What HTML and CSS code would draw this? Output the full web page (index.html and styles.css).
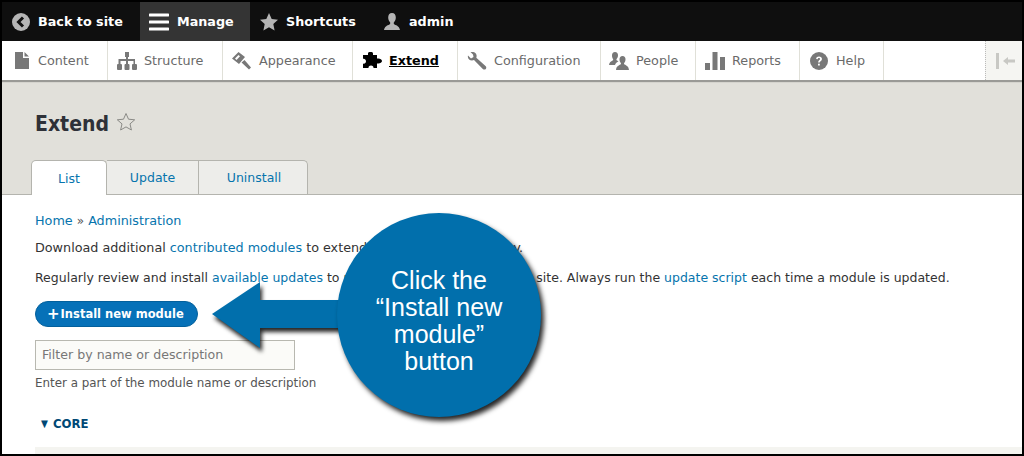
FILE: index.html
```html
<!DOCTYPE html>
<html lang="en">
<head>
<meta charset="utf-8">
<title>Extend</title>
<link rel="stylesheet" href="styles.css">
</head>
<body>
<div class="page">
  <nav class="bar">
    <a class="bar-item back"><svg class="ico" viewBox="0 0 18 18"><circle cx="9" cy="9" r="9" fill="#b5b5b5"/><path d="M11 4.500 6.500 9l4.500 4.500" fill="none" stroke="#111" stroke-width="3"/></svg>Back to site</a>
    <a class="bar-item manage"><svg class="ico-menu" viewBox="0 0 20 20"><path d="M1 1.500h18a1 1 0 0 1 0 3H1a1 1 0 0 1 0-3zM1 8.500h18a1 1 0 0 1 0 3H1a1 1 0 0 1 0-3zM1 15.500h18a1 1 0 0 1 0 3H1a1 1 0 0 1 0-3z" fill="#fff"/></svg>Manage</a>
    <a class="bar-item shortcuts"><svg class="ico" viewBox="0 0 18 18"><path d="M9 0l2.700 6 6.300.7-4.700 4.300 1.300 6.500L9 14.200 3.400 17.500 4.700 11 0 6.700 6.300 6z" fill="#b5b5b5"/></svg>Shortcuts</a>
    <a class="bar-item user"><svg class="ico" viewBox="0 0 18 18"><path d="M9 0c2.600 0 3.800 2 3.800 4.500 0 2-.8 3.600-1.800 4.800-.5.700-.3 1.700.5 2.100 2.500 1.200 5 2 5.500 5.600H1c.5-3.600 3-4.400 5.500-5.600.8-.4 1-1.400.5-2.100C6 8.100 5.200 6.500 5.200 4.500 5.200 2 6.400 0 9 0z" fill="#b5b5b5"/></svg>admin</a>
  </nav>

  <nav class="tray">
    <a class="tray-item w-content"><svg class="tico" viewBox="0 0 14 17"><path d="M0 0h8v6h6v11H0zM9.500 0 14 4.500H9.500z" fill="#787878"/></svg>Content</a>
    <a class="tray-item w-structure"><svg class="tico-wide" viewBox="0 0 20 18"><path d="M8 0h4v5h-1v2h7v5h1a1 1 0 0 1 1 1v4a1 1 0 0 1-1 1h-3a1 1 0 0 1-1-1v-4a1 1 0 0 1 1-1h.5V9H11v3h.5a1 1 0 0 1 1 1v4a1 1 0 0 1-1 1h-3a1 1 0 0 1-1-1v-4a1 1 0 0 1 1-1H9V9H3.500v3H4a1 1 0 0 1 1 1v4a1 1 0 0 1-1 1H1a1 1 0 0 1-1-1v-4a1 1 0 0 1 1-1h.5V7H9V5H8z" fill="#787878"/></svg>Structure</a>
    <a class="tray-item w-appearance"><svg class="tico-wide" viewBox="0 0 20 18"><path d="M0 6.500 6.500 0 13 5 7 12zM9.500 10.500 12.500 8 19 15.500 17 17.500z" fill="#787878"/><path d="M3 6.500 6.500 3 8 4.200 4.500 8z" fill="#fff"/></svg>Appearance</a>
    <a class="tray-item active w-extend"><svg class="tico-wide" viewBox="0 0 20 18"><path d="M1 3h5V1.500C6 .4 7 0 8.500 0S11 .4 11 1.500V3h4v3.500h1.500C18 6.500 20 7.500 20 9s-2 2.500-3.500 2.500H15V16h-3.500c.2-1.200-.8-2.500-2.500-2.500S6.300 14.800 6.500 16H1v-4.500c1.200.5 3 0 3-2.200S2.200 6.300 1 6.800z" fill="#000"/></svg>Extend</a>
    <a class="tray-item w-config"><svg class="tico-wide" viewBox="0 0 20 18"><path d="M1 3.500 4 6.500 6.500 5 6 2.500 3.500 0C6-.5 9 .5 9.500 3c.2 1 .1 2-.2 2.800L18.500 14c1 1 1 2 .3 2.900-.8.900-2 1-3 0L7 8c-3 1.200-7-.5-6-4.500z" fill="#787878"/></svg>Configuration</a>
    <a class="tray-item w-people"><svg class="tico-wide" viewBox="0 0 20 18"><path d="M6 0c2 0 3 1.500 3 3.300 0 1.700-.7 2.800-1.400 3.700-.4.500-.2 1.200.4 1.500l1.500.7C8 10 6.500 11 6 13H0c.3-2.700 2-3.500 3.600-4.500.6-.3.800-1 .4-1.500C3.300 6 3 5 3 3.300 3 1.500 4 0 6 0z" fill="#787878"/><path d="M13.500 4c2 0 3 1.500 3 3.200 0 1.700-.6 2.900-1.300 3.800-.4.500-.2 1.200.4 1.500 1.700 1 4 1.500 4.400 5.500H7c.4-4 2.700-4.500 4.400-5.500.6-.3.800-1 .4-1.500-.7-.9-1.300-2.100-1.300-3.800 0-1.700 1-3.200 3-3.200z" fill="#787878"/></svg>People</a>
    <a class="tray-item w-reports"><svg class="tico-wide" viewBox="0 0 20 18"><path d="M0 11h5v7H0zM7.500 0h5v18h-5zM15 5h5v13h-5z" fill="#787878"/></svg>Reports</a>
    <a class="tray-item w-help"><svg class="tico-wide" viewBox="0 0 20 20"><circle cx="10" cy="10" r="10" fill="#787878"/><path d="M6.800 7.800C7 5.800 8.300 5 10 5c2 0 3.300 1.100 3.300 2.800 0 2.400-2.500 2.300-2.500 4H9c0-2.700 2.200-2.700 2.200-4 0-.7-.5-1.200-1.300-1.200-.8 0-1.200.5-1.300 1.400z" fill="#fff"/><rect x="8.900" y="13" width="2" height="2" fill="#fff"/></svg>Help</a>
    <span class="tray-fill"></span>
    <span class="toggle"><svg class="toggle-ico" viewBox="0 0 20 16"><path d="M0 0h3v16H0z" fill="#c8c8c4"/><path d="M7 8l5-4v2.500h7v3h-7V12z" fill="#c8c8c4"/></svg></span>
  </nav>

  <header class="head">
    <div class="title-row">
      <h1 class="title">Extend</h1>
      <svg class="star" viewBox="0 0 20 20"><path d="M10 1.500l2.500 5.700 6.200.6-4.700 4.100 1.400 6.100L10 14.900l-5.400 3.100L6 11.900 1.300 7.800l6.200-.6z" fill="none" stroke="#8a8a86" stroke-width="1"/></svg>
    </div>
    <ul class="tabs">
      <li class="tab current">List</li>
      <li class="tab t-update">Update</li>
      <li class="tab t-uninstall">Uninstall</li>
    </ul>
  </header>

  <main class="main">
    <p class="crumbs"><a>Home</a> <span class="sep">»</span> <a>Administration</a></p>
    <p class="line first">Download additional <a>contributed modules</a> to extend your site's functionality.</p>
    <p class="line second">Regularly review and install <a>available updates</a> to maintain a secure and current site. Always run the <a>update script</a> each time a module is updated.</p>
    <a class="btn"><span class="plus">+</span>Install new module</a>
    <div class="filter">Filter by name or description</div>
    <p class="hint">Enter a part of the module name or description</p>
    <p class="core"><span class="tri">▼</span>CORE</p>
    <div class="table-head"></div>
  </main>

  <div class="callout">
    <svg class="arrow" viewBox="0 0 150 66"><path d="M0 32 48 0v18h102v28H48v20z" fill="#016fac"/></svg>
    <div class="bubble">Click the<br>“Install new<br>module”<br>button</div>
  </div>
</div>
</body>
</html>
```
FILE: styles.css
```css
* { box-sizing: border-box; }
html, body { margin: 0; padding: 0; }
body { width: 1024px; height: 456px; overflow: hidden; background: #000; font-family: "DejaVu Sans", Verdana, sans-serif; }
a { color: #0674ad; text-decoration: none; }

.page { position: relative; width: 1024px; height: 456px; border: 2px solid #000; background: #fff; overflow: hidden; display: flex; flex-direction: column; }

.bar { height: 39px; flex: none; background: #0f0f0f; display: flex; font-size: 12.75px; font-weight: 700; }
.bar-item { display: flex; align-items: center; color: #fff; height: 39px; }
.ico { width: 18px; height: 18px; margin-right: 8px; flex: none; }
.ico-menu { width: 20px; height: 20px; margin-right: 8px; flex: none; }
.back { padding-left: 10px; width: 138px; }
.manage { padding-left: 9px; width: 110px; background: #343434; }
.shortcuts { padding-left: 10px; width: 133px; }

.tray { height: 39px; flex: none; background: #fff; display: flex; font-size: 12.75px; box-shadow: 0 2px 1px #9a9a96; position: relative; z-index: 1; }
.tray-item { display: flex; align-items: center; height: 39px; color: #6a6a6a; border-right: 1px solid #e0e0d8; }
.tray-item.active { color: #000; font-weight: 700; text-decoration: underline; }
.tico { width: 14px; height: 17px; margin-right: 9px; flex: none; }
.tico-wide { width: 20px; height: 18px; margin-right: 7px; flex: none; }
.w-content { width: 106px; padding-left: 13px; }
.w-structure { width: 115px; padding-left: 9px; }
.w-appearance { width: 130px; padding-left: 9px; }
.w-extend { width: 105px; padding-left: 9px; }
.w-config { width: 143px; padding-left: 9px; }
.w-people { width: 95px; padding-left: 8px; }
.w-reports { width: 104px; padding-left: 9px; }
.w-help { width: 84px; padding-left: 9px; }
.tray-fill { flex: 1; }
.toggle { width: 37px; background: #f5f5f2; border-left: 1px dotted #bbb; display: flex; align-items: center; padding-left: 10px; }
.toggle-ico { width: 20px; height: 16px; }

.head { height: 115px; flex: none; background: #e1e0da; border-bottom: 1px solid #b4b4ae; padding: 0 0 0 29px; display: flex; flex-direction: column; }
.title-row { display: flex; align-items: center; height: 81px; padding: 7px 0 0 4px; }
.title { margin: 0; font-size: 21px; font-weight: 700; font-stretch: condensed; color: #2e3138; }
.star { width: 20px; height: 20px; margin: -3px 0 0 7px; }
.tabs { list-style: none; margin: 0; padding: 0; display: flex; height: 34px; }
.tab { display: flex; align-items: center; justify-content: center; font-size: 12.5px; color: #0674ad; background: #ededea; border: 1px solid #b4b4ae; border-left: 0; border-bottom: 0; }
.tab.current { width: 76px; background: #fff; border-left: 1px solid #b4b4ae; border-radius: 5px 5px 0 0; height: 35px; }
.t-update { width: 92px; }
.t-uninstall { width: 109px; border-radius: 0 5px 0 0; padding-left: 2px; }

.main { flex: 1; padding: 0 0 0 33px; font-size: 12.5px; color: #333; display: flex; flex-direction: column; }
.main p { margin: 0; }
.crumbs { padding-top: 17px; line-height: 17px; color: #555; font-size: 12.75px; }
.sep { font-size: 12px; }
.line { white-space: nowrap; line-height: 17px; }
.main .first { margin-top: 9px; font-size: 12.75px; }
.main .second { margin-top: 13px; }
.btn { align-self: flex-start; margin-top: 15px; width: 163px; height: 26px; border-radius: 13px; background: #0671b8; color: #fff; font-weight: 700; display: flex; align-items: center; padding-left: 11px; border: 1px solid #03609c; font-size: 11.5px; white-space: nowrap; }
.plus { margin-right: 1px; font-weight: 700; font-size: 15px; line-height: 1; }
.filter { margin-top: 13px; width: 260px; height: 30px; border: 1px solid #b8b8b0; background: #fbfbf8; padding-left: 6px; color: #777; line-height: 28px; font-size: 12.6px; }
.main .hint { margin-top: 5px; font-size: 11.9px; line-height: 17px; color: #555; }
.main .core { margin-top: 23px; padding-left: 6px; font-size: 13px; font-weight: 700; font-stretch: condensed; line-height: 17px; color: #004875; }
.tri { font-size: 10px; margin-right: 5px; vertical-align: 1px; }
.table-head { margin-top: 15px; flex: 1; background: #f4f4f0; }

.callout { position: absolute; left: 0; top: 0; width: 0; height: 0; }
.arrow { position: absolute; left: 210px; top: 280px; width: 150px; height: 66px; filter: drop-shadow(2px 4px 2px rgba(0,0,0,.85)); }
.bubble { position: absolute; left: 335px; top: 211px; width: 204px; height: 204px; padding-top: 12px; border-radius: 50%; background: #016fac; color: #fff; box-shadow: 3px 4px 5px rgba(0,0,0,.85); font-family: "Liberation Sans", Arial, sans-serif; font-size: 25px; line-height: 27px; text-align: center; display: flex; align-items: center; justify-content: center; }
```
